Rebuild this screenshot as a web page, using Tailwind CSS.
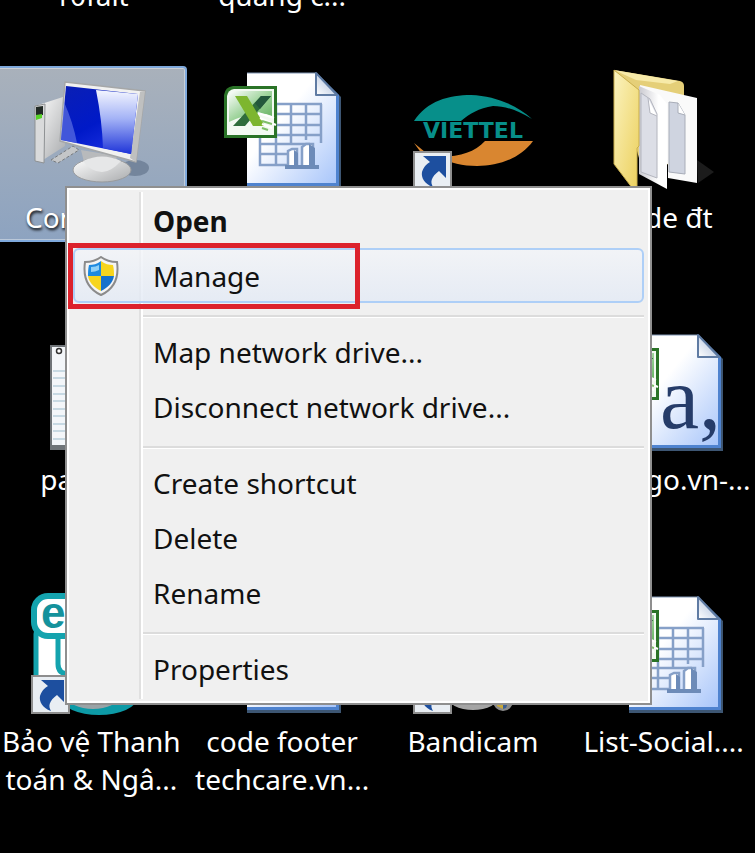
<!DOCTYPE html>
<html lang="vi">
<head>
  <meta charset="UTF-8">
  <meta name="viewport" content="width=device-width, initial-scale=1.0">
  <title>Desktop</title>
  <script src="https://cdn.jsdelivr.net/npm/@tailwindcss/browser@4"></script>
</head>
<body class="relative min-h-screen overflow-hidden bg-black font-['Noto_Sans',sans-serif] text-[28px] leading-[38px] text-white">
  <!-- Shared icon parts -->
  <svg class="absolute size-0" aria-hidden="true">
    <defs>
      <linearGradient id="paper" x1="0" y1="0" x2="1" y2="1">
        <stop offset="0.4" stop-color="#ffffff"/>
        <stop offset="1" stop-color="#a9c6fa"/>
      </linearGradient>
      <linearGradient id="fold" x1="0" y1="1" x2="1" y2="0">
        <stop offset="0" stop-color="#ffffff"/>
        <stop offset="1" stop-color="#9fb4d6"/>
      </linearGradient>
      <linearGradient id="badge" x1="0" y1="0" x2="1" y2="1">
        <stop offset="0" stop-color="#ffffff"/>
        <stop offset="0.5" stop-color="#9fd49c"/>
        <stop offset="1" stop-color="#5fae5b"/>
      </linearGradient>
      <linearGradient id="screen" x1="0" y1="0" x2="0.6" y2="1">
        <stop offset="0" stop-color="#0a1fb4"/>
        <stop offset="0.6" stop-color="#0019c8"/>
        <stop offset="1" stop-color="#1a2fe0"/>
      </linearGradient>
      <linearGradient id="glare" x1="0" y1="0" x2="0" y2="1">
        <stop offset="0" stop-color="#f4f6ff"/>
        <stop offset="0.45" stop-color="#a3b2f6"/>
        <stop offset="1" stop-color="#1e34d8"/>
      </linearGradient>
      <linearGradient id="plastic" x1="0" y1="0" x2="1" y2="1">
        <stop offset="0" stop-color="#ffffff"/>
        <stop offset="1" stop-color="#a9abad"/>
      </linearGradient>
      <linearGradient id="yellow" x1="0" y1="0" x2="1" y2="1">
        <stop offset="0" stop-color="#fbf3bf"/>
        <stop offset="1" stop-color="#ecd05c"/>
      </linearGradient>
      <linearGradient id="sheetgrey" x1="0" y1="0" x2="1" y2="0">
        <stop offset="0" stop-color="#c9c9cf"/>
        <stop offset="0.7" stop-color="#ffffff"/>
      </linearGradient>
    </defs>
    <symbol id="page" viewBox="0 0 128 128">
      <path d="M29 5H99L123 29V121H29Z" fill="#3d5673"/>
      <path d="M29 5H98L121 27V118H29Z" fill="#4f83cf"/>
      <path d="M29 5H98L118 26V115H29Z" fill="url(#paper)"/>
      <path d="M29 5H98" stroke="#8096b4" stroke-width="1"/>
      <path d="M98 5V27H119Z" fill="url(#fold)" stroke="#5f7ba3" stroke-width="2" stroke-linejoin="round"/>
    </symbol>
    <symbol id="cells" viewBox="0 0 128 128">
      <g fill="none" stroke="#86a0c8" stroke-width="2.5">
        <path d="M58 36H104M58 46H104M58 57H104M42 67H104M73 36V76M88 36V72M103 36V75M58 36V76"/>
        <path d="M42 76H92M42 67V97H70M42 86H70M58 76V97"/>
        <path d="M70 98V83L74 81H79V98M84 98V79L88 76H95V98" fill="#ffffff"/>
      </g>
      <path d="M76 82L80 85V98H76ZM91 76L97 80V98H91ZM67 97H101V101H67Z" fill="#6d8bb8"/>
    </symbol>
    <symbol id="excel" viewBox="0 0 128 128">
      <path d="M15 18H59V70H6V27Q7 19 15 18Z" fill="#2a7327"/>
      <path d="M16 21H56V67H9V28Q10 22 16 21Z" fill="#f3faf2"/>
      <path d="M17 23H54V48Q38 41 11 54V30Q12 24 17 23Z" fill="url(#badge)"/>
      <path d="M43 28H53L27 58H15Z" fill="#2f6d3b"/>
      <path d="M17 28H29L47 58H35Z" fill="#7db62f"/>
      <path d="M43 28H53L42 41L37 35Z" fill="#23573c"/>
      <path d="M40 45L56 50M42 50L58 57M44 56L54 60" stroke="#ffffff" stroke-width="2"/>
      <path d="M44 53L54 56M44 60L50 62" stroke="#7fbf6a" stroke-width="2"/>
    </symbol>
    <symbol id="shortcut" viewBox="0 0 128 128">
      <path d="M4 83H43V122H4Z" fill="#8e8e8e"/>
      <path d="M6 85H41V120H6Z" fill="#e9eef3"/>
      <path d="M14 88H37V110L30 103C22 109 21 114 24 119C15 116 12 109 13 104C15 98 18 96 21 94Z" fill="#1d4f9f"/>
    </symbol>
  </svg>

  <!-- Desktop icons -->
  <main class="-mx-1 grid grid-cols-4 text-center">
    <div class="-mt-6 h-[90px]">10falt</div>
    <div class="-mt-6 h-[90px]">quảng c...</div>
    <div></div>
    <div></div>

    <div class="h-[262px]">
      <div class="flex flex-col items-center gap-0.5 rounded border-2 border-[#7fa9dc] bg-linear-to-b from-[#a9b1bb] to-[#8da3c0] pb-1 inset-ring inset-ring-white/40">
        <svg class="size-32" viewBox="0 0 128 128" role="img" aria-label="Computer">
          <ellipse cx="108" cy="100" rx="14" ry="8" fill="#74859c"/>
          <path d="M8 38L36 29L38 78L16 92L8 92Z" fill="url(#plastic)"/>
          <path d="M8 38L18 36L17 95L8 93Z" fill="#d9dadb" stroke="#8e9193" stroke-width="1"/>
          <path d="M9 39L16 38V47L9 48Z" fill="#222a26"/>
          <path d="M9 47L15 46V50L9 52Z" fill="#57d22a"/>
          <path d="M24 92L46 78L52 82L31 95Z" fill="#c4c6c8" stroke="#777a7d" stroke-width="1" stroke-dasharray="3 2"/>
          <path d="M54 82L90 88L88 98H58Z" fill="#b8babc"/>
          <ellipse cx="75" cy="102" rx="29" ry="12" fill="url(#plastic)" stroke="#999b9d"/>
          <path d="M56 93Q75 84 94 93Q84 104 75 104Q64 104 56 93Z" fill="#e6e7e8"/>
          <path d="M38 14L118 23L109 94L33 73Z" fill="#f1f1f0" stroke="#a5a7a8" stroke-width="1.5" stroke-linejoin="round"/>
          <path d="M113 24L118 23L109 94L103 90Z" fill="#bfc0c0"/>
          <path d="M39 18L111 26L104 86L34 72Z" fill="url(#screen)"/>
          <path d="M69 22L111 26L104 86L76 80Q75 52 69 22Z" fill="url(#glare)"/>
          <path d="M37 34Q46 54 50 75L34 72Z" fill="#6d7fe8" opacity="0.6"/>
        </svg>
        <span class="text-shadow-[1px_2px_3px_#000000]">Computer</span>
      </div>
    </div>
    <div class="flex flex-col items-center pt-0.5">
      <svg class="size-32" viewBox="0 0 128 128" role="img" aria-label="Spreadsheet">
        <use href="#page"/>
        <use href="#cells"/>
        <use href="#excel"/>
      </svg>
    </div>
    <div class="flex flex-col items-center pt-0.5">
      <svg class="size-32" viewBox="0 0 128 128" role="img" aria-label="Viettel">
        <path d="M5 53C18 33 40 27 62 27C86 28 108 37 123 51C108 42 96 38 84 38C70 40 60 46 52 53Z" fill="#078f8a"/>
        <text x="64" y="70" text-anchor="middle" class="font-['DejaVu_Sans'] text-[22px] font-bold" fill="#078f8a">VIETTEL</text>
        <path d="M76 73H124C112 90 90 98 68 98C54 98 40 95 32 89C52 88 66 84 76 73ZM5 75L16 84L13 86Z" fill="#d98630"/>
        <use href="#shortcut"/>
      </svg>
    </div>
    <div class="flex flex-col items-center gap-0.5 pt-0.5">
      <svg class="size-32" viewBox="0 0 128 128" role="img" aria-label="Folder">
        <path d="M97 92L114 104L98 115Z" fill="#1c1c1c"/>
        <path d="M14 2L80 13Q84 14 84 18V100L39 90Z" fill="#e5cf78"/>
        <path d="M14 2L78 13L70 16L36 12Z" fill="#f7eaa9"/>
        <path d="M40 17L97 30V115L68 110V96L40 90Z" fill="#fafafa"/>
        <path d="M69 34L78 35L85 47V106L69 104Z" fill="#cfd4e0" stroke="#a8adb8"/>
        <path d="M78 35V45L85 47" fill="#ffffff" stroke="#a8adb8"/>
        <path d="M39 18L60 27L67 36V121L39 106Z" fill="url(#sheetgrey)"/>
        <path d="M41 25L50 31L57 46V110L41 104Z" fill="#dcdee6" stroke="#b4b6bf"/>
        <path d="M48 30L50 45L57 48" fill="#ffffff" stroke="#b4b6bf"/>
        <path d="M14 2L39 22V78L37 80V121H33L14 96Z" fill="url(#yellow)" stroke="#c9ae4c" stroke-width="1"/>
      </svg>
      <span>code đt</span>
    </div>

    <div class="flex h-[262px] flex-col items-center gap-0.5 pt-0.5">
      <svg class="size-32" viewBox="0 0 128 128" role="img" aria-label="Text file">
        <path d="M23 15H105V120H23Z" fill="#6f7478"/>
        <path d="M25 17H103V115H25Z" fill="#f3f6f9"/>
        <path d="M26 41H103M26 48H103M26 56H103M26 64H103M26 71H103M26 79H103M26 86H103M26 94H103M26 101H103M26 109H103" stroke="#b9cfdc" stroke-width="1.5"/>
        <circle cx="32" cy="21" r="2.5" fill="#ffffff" stroke="#333333" stroke-width="1.5"/>
      </svg>
      <span>pass.txt</span>
    </div>
    <div></div>
    <div></div>
    <div class="flex flex-col items-center gap-0.5 pt-0.5">
      <svg class="size-32" viewBox="0 0 128 128" role="img" aria-label="CSV file">
        <use href="#page"/>
        <text x="60" y="98" class="font-['Liberation_Serif'] text-[88px]" fill="#263c69">a,</text>
        <use href="#excel"/>
      </svg>
      <span>phungo.vn-...</span>
    </div>

    <div class="flex flex-col items-center gap-0.5 pt-0.5">
      <svg class="size-32" viewBox="0 0 128 128" role="img" aria-label="ESET">
        <ellipse cx="72" cy="106" rx="38" ry="17" fill="#0d9aa6"/>
        <ellipse cx="66" cy="104" rx="26" ry="13" fill="#9aa3a6"/>
        <rect x="9" y="34" width="90" height="70" rx="8" fill="#ffffff" stroke="#14a3ae" stroke-width="5"/>
        <path d="M31 42V72Q31 82 42 82" fill="none" stroke="#14a3ae" stroke-width="5"/>
        <rect x="7" y="4" width="90" height="40" rx="14" fill="#ffffff" stroke="#14a3ae" stroke-width="6"/>
        <text x="14" y="36" class="font-['Liberation_Sans'] text-[44px] font-bold" fill="#14929c">e</text>
        <use href="#shortcut"/>
      </svg>
      <span class="whitespace-nowrap">Bảo vệ Thanh<br>toán &amp; Ngâ...</span>
    </div>
    <div class="flex flex-col items-center gap-0.5 pt-0.5">
      <svg class="size-32" viewBox="0 0 128 128" role="img" aria-label="Code file">
        <use href="#page"/>
      </svg>
      <span class="whitespace-nowrap">code footer<br>techcare.vn...</span>
    </div>
    <div class="flex flex-col items-center gap-0.5 pt-0.5">
      <svg class="size-32" viewBox="0 0 128 128" role="img" aria-label="Bandicam">
        <ellipse cx="64" cy="104" rx="26" ry="14" fill="#a5a5a5"/>
        <circle cx="94" cy="109" r="10" fill="#8b8b8b"/>
        <path d="M88 108H94V117L88 114Z" fill="#c8a93c"/>
        <path d="M94 108H100L97 116L94 117Z" fill="#3c5f92"/>
        <use href="#shortcut"/>
      </svg>
      <span>Bandicam</span>
    </div>
    <div class="flex flex-col items-center gap-0.5 pt-0.5">
      <svg class="size-32" viewBox="0 0 128 128" role="img" aria-label="Spreadsheet">
        <use href="#page"/>
        <use href="#cells"/>
        <use href="#excel"/>
      </svg>
      <span>List-Social....</span>
    </div>
  </main>

  <!-- Context menu -->
  <div role="menu" class="absolute top-[186px] left-[65px] w-[587px] border-2 border-[#8f8f8f] bg-[#f0f0f0] px-1.5 pt-[5px] pb-[7px] text-[#111111] inset-ring-2 inset-ring-white">
    <div class="absolute inset-y-1 left-[72px] w-1 border-l-2 border-[#e0e0e0] bg-white"></div>
    <div class="relative flex flex-col">
      <button role="menuitem" class="h-[55px] pl-20 text-left font-bold">Open</button>
      <button role="menuitem" class="relative flex h-[55px] items-center rounded-md border-2 border-[#aecff7] bg-linear-to-b from-[#f2f4f8]/80 to-[#e3eaf5]/80 text-left">
        <svg class="ml-2 h-10 w-9" viewBox="0 0 36 40" aria-hidden="true">
          <path d="M18 1C22 4 28 6 34 6C36 20 33 32 18 39C3 32 0 20 2 6C8 6 14 4 18 1Z" fill="#f4f4f4" stroke="#8b8b8b" stroke-width="2"/>
          <path d="M18 5V20H5C5 17 5 13 6 9C10 9 14 8 18 5Z" fill="#1e8ae0"/>
          <path d="M18 5C22 8 26 9 30 9C31 13 31 17 31 20H18Z" fill="#f7d51d"/>
          <path d="M5 20H18V35C10 31 6 26 5 20Z" fill="#f7d51d"/>
          <path d="M18 20H31C30 26 26 31 18 35Z" fill="#1672cc"/>
          <path d="M8 11Q13 11 16 9V14Q12 16 8 16Z" fill="#8fd0f7"/>
        </svg>
        <span class="ml-[34px]">Manage</span>
      </button>
      <hr class="mt-3 mb-1.5 ml-[70px] h-[3px] border-t-2 border-[#dcdcdc] bg-white">
      <button role="menuitem" class="h-[55px] pl-20 text-left">Map network drive...</button>
      <button role="menuitem" class="h-[55px] pl-20 text-left">Disconnect network drive...</button>
      <hr class="mt-3 mb-1.5 ml-[70px] h-[3px] border-t-2 border-[#dcdcdc] bg-white">
      <button role="menuitem" class="h-[55px] pl-20 text-left">Create shortcut</button>
      <button role="menuitem" class="h-[55px] pl-20 text-left">Delete</button>
      <button role="menuitem" class="h-[55px] pl-20 text-left">Rename</button>
      <hr class="mt-3 mb-1.5 ml-[70px] h-[3px] border-t-2 border-[#dcdcdc] bg-white">
      <button role="menuitem" class="h-[55px] pl-20 text-left">Properties</button>
    </div>
    <!-- Highlight box around Manage -->
    <div class="pointer-events-none absolute top-[55px] left-px h-[66px] w-[292px] border-[5px] border-[#dc222c]"></div>
  </div>
</body>
</html>
